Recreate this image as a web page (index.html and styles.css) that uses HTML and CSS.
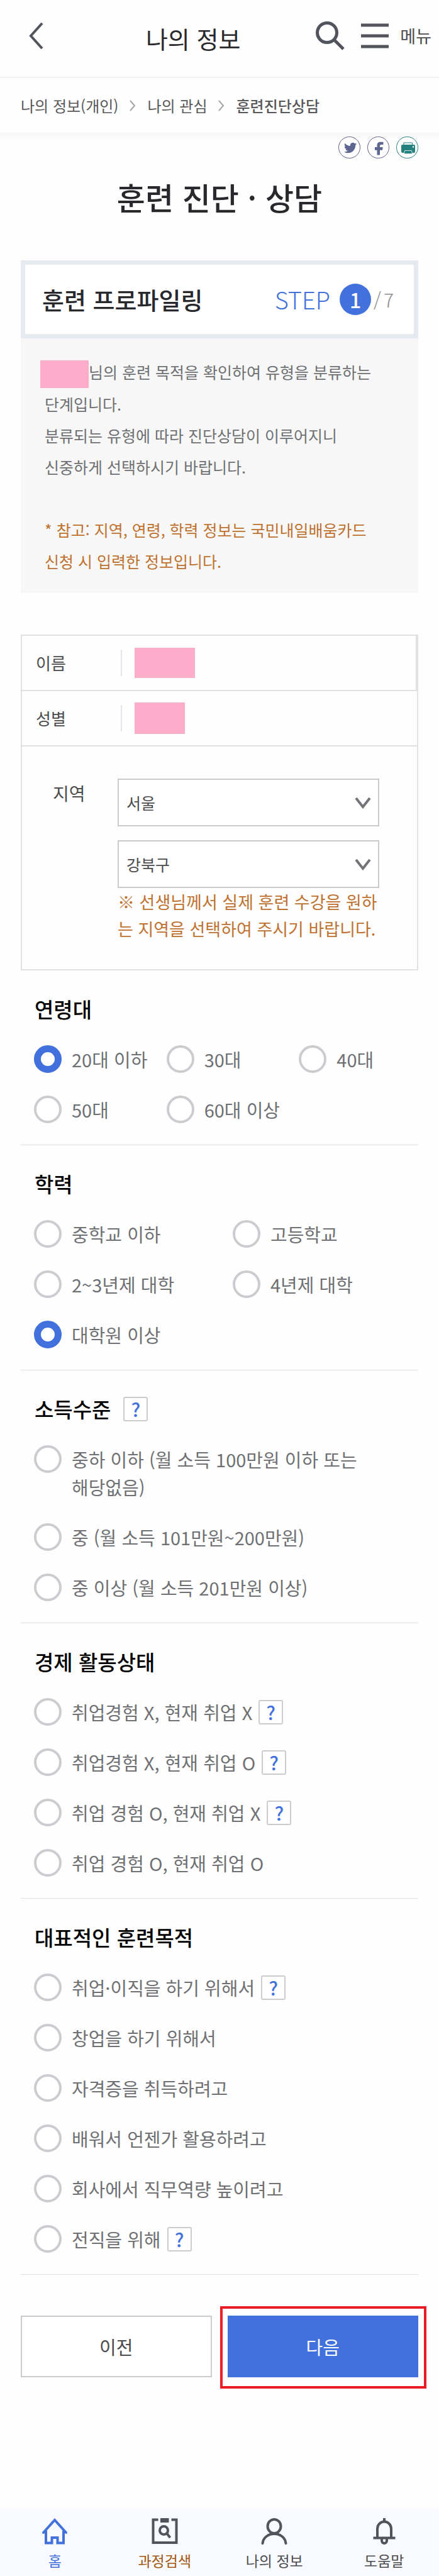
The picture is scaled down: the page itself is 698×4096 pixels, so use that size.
FILE: index.html
```html
<!DOCTYPE html>
<html lang="ko">
<head>
    <meta charset="UTF-8">
    <meta name="viewport" content="width=device-width, initial-scale=1.0">
    <title>훈련 진단 · 상담</title>
    <link rel="stylesheet" href="styles.css">
</head>
<body>
    <header class="header">
        <button class="back-button" type="button" aria-label="뒤로">
            <svg width="24" height="42" viewBox="0 0 24 42" fill="none" stroke="#51545d" stroke-width="4"><path d="M21 1L3 21l18 20"/></svg>
        </button>
        <div class="header-title">나의 정보</div>
        <div class="header-actions">
            <button class="icon-button" type="button" aria-label="검색">
                <svg width="46" height="46" viewBox="0 0 46 46" fill="none" stroke="#51545d" stroke-width="5"><circle cx="18" cy="18" r="15.5"/><path d="M29 29l15 15"/></svg>
            </button>
            <button class="icon-button" type="button">
                <svg width="44" height="40" viewBox="0 0 44 40" fill="none" stroke="#51545d" stroke-width="5"><path d="M0 3h44M0 20h44M0 37h44"/></svg>
                <span>메뉴</span>
            </button>
        </div>
    </header>

    <nav class="breadcrumb">
        <a href="#">나의 정보(개인)</a>
        <svg width="10" height="18" viewBox="0 0 10 18" fill="none" stroke="#a5a5a5" stroke-width="2"><path d="M1 1l7 8-7 8"/></svg>
        <a href="#">나의 관심</a>
        <svg width="10" height="18" viewBox="0 0 10 18" fill="none" stroke="#a5a5a5" stroke-width="2"><path d="M1 1l7 8-7 8"/></svg>
        <a href="#" class="current">훈련진단상담</a>
    </nav>

    <main class="container">
        <div class="share">
            <a href="#" aria-label="트위터">
                <svg width="35" height="35" viewBox="0 0 35 35"><circle cx="17.5" cy="17.5" r="17" fill="#fff" stroke="#5c6089"/><path fill="#5c668f" transform="translate(9 8) scale(.84)" d="M23.953 4.57a10 10 0 01-2.825.775 4.958 4.958 0 002.163-2.723c-.951.555-2.005.959-3.127 1.184a4.92 4.92 0 00-8.384 4.482C7.69 8.095 4.067 6.13 1.64 3.162a4.822 4.822 0 00-.666 2.475c0 1.71.87 3.213 2.188 4.096a4.904 4.904 0 01-2.228-.616v.06a4.923 4.923 0 003.946 4.827 4.996 4.996 0 01-2.212.085 4.936 4.936 0 004.604 3.417 9.867 9.867 0 01-6.102 2.105c-.39 0-.779-.023-1.17-.067a13.995 13.995 0 007.557 2.209c9.053 0 13.998-7.496 13.998-13.985 0-.21 0-.42-.015-.63A9.935 9.935 0 0024 4.59z"/></svg>
            </a>
            <a href="#" aria-label="페이스북">
                <svg width="35" height="35" viewBox="0 0 35 35"><circle cx="17.5" cy="17.5" r="17" fill="#fff" stroke="#5c6089"/><path fill="#5c668f" d="M15.5 29.5V21.7H12V17h3.5v-2.5c0-4 2-5.7 5.5-5.7h4.4V13h-2.9C20.7 13 20 13.7 20 15.2V17h4.7l-.7 4.7h-4v7.8z"/></svg>
            </a>
            <a href="#" aria-label="인쇄">
                <svg width="35" height="35" viewBox="0 0 35 35"><circle cx="17.5" cy="17.5" r="17" fill="#fff" stroke="#24807d"/><path d="M12 13v-3h13.5v3" fill="none" stroke="#24807d"/><rect x="8" y="13" width="22" height="13" rx="2" fill="#24807d"/><circle cx="27" cy="16.5" r="1.2" fill="#fff"/><path d="M13.5 22.5h11l1 5h-13z" fill="#24807d" stroke="#cfe6e5"/></svg>
            </a>
        </div>

        <h1>훈련 진단 · 상담</h1>

        <div class="step-box">
            <h2>훈련 프로파일링</h2>
            <div class="step">
                <span class="step-label">STEP</span>
                <span class="step-now">1</span>
                <span class="step-total"><span>/</span><span>7</span></span>
            </div>
        </div>
        <div class="description">
            <p><span class="mask mask-inline"></span>님의 훈련 목적을 확인하여 유형을 분류하는 단계입니다.<br>분류되는 유형에 따라 진단상담이 이루어지니<br>신중하게 선택하시기 바랍니다.</p>
            <p class="notice">* 참고: 지역, 연령, 학력 정보는 국민내일배움카드 신청 시 입력한 정보입니다.</p>
        </div>

        <div class="profile">
            <div class="profile-row name-row">
                <span class="profile-label">이름</span>
                <span class="mask mask-name"></span>
            </div>
            <div class="profile-row">
                <span class="profile-label">성별</span>
                <span class="mask mask-gender"></span>
            </div>
            <div class="region">
                <label class="region-label" for="sido">지역</label>
                <div class="region-fields">
                    <div class="select-wrap">
                        <select id="sido"><option>서울</option></select>
                        <svg class="arrow" width="26" height="18" viewBox="0 0 26 18" fill="none" stroke="#737479" stroke-width="4"><path d="M2 1l11 14L24 1"/></svg>
                    </div>
                    <div class="select-wrap">
                        <select id="gugun" aria-label="구/군"><option>강북구</option></select>
                        <svg class="arrow" width="26" height="18" viewBox="0 0 26 18" fill="none" stroke="#737479" stroke-width="4"><path d="M2 1l11 14L24 1"/></svg>
                    </div>
                    <p class="region-note">※ 선생님께서 실제 훈련 수강을 원하는 지역을 선택하여 주시기 바랍니다.</p>
                </div>
            </div>
        </div>

        <form>
            <section class="question">
                <h3>연령대</h3>
                <ul class="options cols-3">
                    <li><label><input type="radio" name="age" checked><span>20대 이하</span></label></li>
                    <li><label><input type="radio" name="age"><span>30대</span></label></li>
                    <li><label><input type="radio" name="age"><span>40대</span></label></li>
                    <li><label><input type="radio" name="age"><span>50대</span></label></li>
                    <li><label><input type="radio" name="age"><span>60대 이상</span></label></li>
                </ul>
            </section>

            <section class="question">
                <h3>학력</h3>
                <ul class="options cols-2">
                    <li><label><input type="radio" name="edu"><span>중학교 이하</span></label></li>
                    <li><label><input type="radio" name="edu"><span>고등학교</span></label></li>
                    <li><label><input type="radio" name="edu"><span>2~3년제 대학</span></label></li>
                    <li><label><input type="radio" name="edu"><span>4년제 대학</span></label></li>
                    <li><label><input type="radio" name="edu" checked><span>대학원 이상</span></label></li>
                </ul>
            </section>

            <section class="question">
                <h3>소득수준 <button class="help" type="button">?</button></h3>
                <ul class="options">
                    <li><label><input type="radio" name="income"><span>중하 이하 (월 소득 100만원 이하 또는 해당없음)</span></label></li>
                    <li><label><input type="radio" name="income"><span>중 (월 소득 101만원~200만원)</span></label></li>
                    <li><label><input type="radio" name="income"><span>중 이상 (월 소득 201만원 이상)</span></label></li>
                </ul>
            </section>

            <section class="question">
                <h3>경제 활동상태</h3>
                <ul class="options">
                    <li><label><input type="radio" name="work"><span>취업경험 X, 현재 취업 X</span></label><button class="help" type="button">?</button></li>
                    <li><label><input type="radio" name="work"><span>취업경험 X, 현재 취업 O</span></label><button class="help" type="button">?</button></li>
                    <li><label><input type="radio" name="work"><span>취업 경험 O, 현재 취업 X</span></label><button class="help" type="button">?</button></li>
                    <li><label><input type="radio" name="work"><span>취업 경험 O, 현재 취업 O</span></label></li>
                </ul>
            </section>

            <section class="question">
                <h3>대표적인 훈련목적</h3>
                <ul class="options">
                    <li><label><input type="radio" name="goal"><span>취업·이직을 하기 위해서</span></label><button class="help" type="button">?</button></li>
                    <li><label><input type="radio" name="goal"><span>창업을 하기 위해서</span></label></li>
                    <li><label><input type="radio" name="goal"><span>자격증을 취득하려고</span></label></li>
                    <li><label><input type="radio" name="goal"><span>배워서 언젠가 활용하려고</span></label></li>
                    <li><label><input type="radio" name="goal"><span>회사에서 직무역량 높이려고</span></label></li>
                    <li><label><input type="radio" name="goal"><span>전직을 위해</span></label><button class="help" type="button">?</button></li>
                </ul>
            </section>

            <div class="buttons">
                <button class="btn" type="button">이전</button>
                <div class="highlight">
                    <button class="btn btn-primary" type="submit">다음</button>
                </div>
            </div>
        </form>
    </main>

    <nav class="tab-bar">
        <a href="#" class="active">
            <svg width="42" height="42" viewBox="0 0 42 42" fill="none" stroke="currentColor" stroke-width="4"><path d="M3 23L21 3l18 20" stroke-linecap="round"/><path d="M7 20v19.5h9.500V31h9v8.5H35V20"/></svg>
            <span>홈</span>
        </a>
        <a href="#" class="course">
            <svg width="42" height="42" viewBox="0 0 42 42" fill="none" stroke="#51545d" stroke-width="4"><path d="M10.5 2.5h-8V39h37V2.5h-8"/><path d="M14 3.5h13.5" stroke-width="7"/><circle cx="19.5" cy="19.5" r="6.5"/><path d="M24 24l5.5 7"/></svg>
            <span>과정검색</span>
        </a>
        <a href="#">
            <svg width="42" height="42" viewBox="0 0 42 42" fill="none" stroke="#51545d" stroke-width="4"><ellipse cx="21" cy="13" rx="10.5" ry="11"/><path d="M2.500 40C5 20 37 20 39.500 40" stroke-linecap="round"/></svg>
            <span>나의 정보</span>
        </a>
        <a href="#">
            <svg width="42" height="42" viewBox="0 0 42 42" fill="none" stroke="#51545d" stroke-width="4"><path d="M21 0v6M10 31V17a11 11.5 0 0 1 22 0v14M3.500 31.500h35M17 33v3a4 4 0 0 0 8 0v-3"/></svg>
            <span>도움말</span>
        </a>
    </nav>
</body>
</html>
```
FILE: styles.css
```css
* {
    box-sizing: border-box;
}

body {
    font-family: "Noto Sans CJK KR", "Noto Sans", sans-serif;
    background-color: #fefefe;
    color: #4c4c4e;
    min-height: 100vh;
    margin: 0;
    display: flex;
    flex-direction: column;
    word-break: keep-all;
}

h1, h2, h3, p, ul {
    margin: 0;
    padding: 0;
}

h1, h2, h3 {
    font-weight: 500;
}

a {
    color: inherit;
    text-decoration: none;
}

button, select, input {
    font-family: inherit;
    margin: 0;
}

button {
    background: none;
    border: none;
    padding: 0;
    cursor: pointer;
}

svg {
    display: block;
}

/* Header */
.header {
    display: flex;
    align-items: center;
    height: 124px;
    border-bottom: 2px solid #f2f2f2;
}

.back-button {
    width: 112px;
    padding: 0 0 8px 46px;
}

.header-title {
    flex: 1;
    font-size: 38px;
    line-height: 56px;
    text-align: center;
    color: #28292d;
}

.header-actions {
    display: flex;
    gap: 26px;
    padding: 0 12px 8px 0;
}

.icon-button {
    display: flex;
    align-items: center;
    gap: 18px;
    font-size: 27px;
    line-height: 40px;
    color: #4c4c4e;
}

.breadcrumb {
    display: flex;
    align-items: center;
    gap: 18px;
    height: 87px;
    padding: 0 33px;
    font-size: 24px;
    color: #58585a;
}

.breadcrumb .current {
    font-weight: 500;
}

.container {
    padding: 6px 33px 0;
    background: linear-gradient(#f7f7f7, #fefefe 14px);
}

.share {
    display: flex;
    justify-content: flex-end;
    gap: 11px;
}

h1 {
    margin: 25px 0 65px;
    font-size: 49px;
    line-height: 72px;
    text-align: center;
    color: #28292d;
}

/* Step box */
.step-box {
    display: flex;
    justify-content: space-between;
    align-items: center;
    height: 124px;
    padding: 0 32px 0 27px;
    border: 7px solid #e5e9f0;
    background-color: #fff;
}

h2 {
    font-size: 38px;
    line-height: 56px;
    color: #28292d;
}

.step {
    display: flex;
    align-items: center;
}

.step-label {
    margin-right: 15px;
    font-size: 38px;
    line-height: 50px;
    font-weight: 300;
    color: #4271dd;
}

.step-now {
    width: 50px;
    height: 50px;
    margin-right: 4px;
    border-radius: 50%;
    background-color: #4271dd;
    color: #fff;
    font-size: 32px;
    line-height: 50px;
    font-weight: 500;
    text-align: center;
}

.step-total {
    display: flex;
    gap: 4px;
    font-size: 30px;
    line-height: 50px;
    font-weight: 200;
    color: #8b8b8d;
}

.description {
    padding: 28px 38px 26px;
    background-color: #f7f7f7;
    font-size: 25px;
    line-height: 50px;
    color: #6f7073;
}

.notice {
    margin-top: 50px;
    color: #bf7130;
}

.mask {
    display: inline-block;
    background-color: #fdadc9;
}

.mask-inline {
    width: 77px;
    height: 44px;
    margin-left: -7px;
    vertical-align: middle;
}

.mask-name {
    width: 96px;
    height: 48px;
}

.mask-gender {
    width: 80px;
    height: 50px;
}

/* Profile table */
.profile {
    margin-top: 66px;
    border: 2px solid #e1e1e2;
}

.profile-row {
    display: flex;
    align-items: center;
    gap: 20px;
    height: 88px;
    padding-left: 22px;
    border-bottom: 2px solid #e1e1e2;
}

.name-row {
    border-right: 2px solid #e1e1e2;
}

.profile-label {
    width: 137px;
    border-right: 2px solid #e2e6ec;
    font-size: 26px;
    line-height: 42px;
}

.region {
    display: flex;
    padding: 51px 60px 43px 49px;
}

.region-label {
    width: 103px;
    font-size: 28px;
    line-height: 46px;
}

.region-fields {
    flex: 1;
}

.select-wrap {
    position: relative;
    margin-bottom: 22px;
}

.select-wrap + .select-wrap {
    margin-bottom: 0;
}

.select-wrap select {
    display: block;
    width: 100%;
    height: 76px;
    padding: 0 50px 0 12px;
    border: 2px solid #cacacb;
    border-radius: 0;
    background-color: #fff;
    color: #4c4c4e;
    font-size: 25px;
    appearance: none;
}

.arrow {
    position: absolute;
    top: 30px;
    right: 13px;
    pointer-events: none;
}

.region-note {
    font-size: 27px;
    line-height: 43px;
    color: #bf7130;
    word-break: break-all;
}

/* Questions */
.question {
    padding: 40px 0 16px;
    border-bottom: 1px solid #e0e0e2;
}

h3 {
    display: flex;
    align-items: center;
    gap: 20px;
    margin-bottom: 19px;
    padding-left: 22px;
    font-size: 33px;
    line-height: 42px;
    color: #000;
}

.options {
    display: grid;
    list-style: none;
}

.cols-3 {
    grid-template-columns: repeat(3, 1fr);
}

.cols-2 {
    grid-template-columns: repeat(2, 1fr);
}

.options li {
    display: flex;
    align-items: center;
    gap: 10px;
    padding: 18px 0 18px 21px;
}

.options label {
    display: flex;
    align-items: flex-start;
    gap: 16px;
    max-width: 550px;
    font-size: 29px;
    line-height: 44px;
    color: #6f7073;
}

.options input {
    flex: none;
    width: 44px;
    height: 44px;
    border: 4px solid #cbccd0;
    border-radius: 50%;
    background-color: #fff;
    appearance: none;
}

.options input:checked {
    border: 11px solid #4271dd;
}

.help {
    width: 39px;
    height: 39px;
    border: 2px solid #cbccd0;
    border-radius: 3px;
    background-color: #fff;
    color: #4271dd;
    font-size: 30px;
    line-height: 34px;
    font-weight: 500;
}

/* Buttons */
.buttons {
    display: grid;
    grid-template-columns: 1fr 1fr;
    gap: 25px;
    margin-top: 65px;
}

.btn {
    width: 100%;
    height: 98px;
    border: 2px solid #cbccd0;
    background-color: #fff;
    color: #4c4c4e;
    font-size: 29px;
}

.btn-primary {
    border-color: #4271dd;
    background-color: #4271dd;
    color: #fff;
}

.highlight {
    position: relative;
}

.highlight::after {
    content: "";
    position: absolute;
    inset: -15px -13px -18px -12px;
    border: 4px solid #ea1c24;
    pointer-events: none;
}

/* Bottom tab bar */
.tab-bar {
    display: grid;
    grid-template-columns: repeat(4, 1fr);
    height: 108px;
    margin-top: auto;
    padding-top: 16px;
    background-color: #f8faff;
    font-size: 23px;
    line-height: 34px;
}

.tab-bar a {
    display: flex;
    flex-direction: column;
    align-items: center;
    gap: 8px;
}

.tab-bar .active {
    color: #4271dd;
}

.tab-bar .course {
    color: #a3560f;
}
```
